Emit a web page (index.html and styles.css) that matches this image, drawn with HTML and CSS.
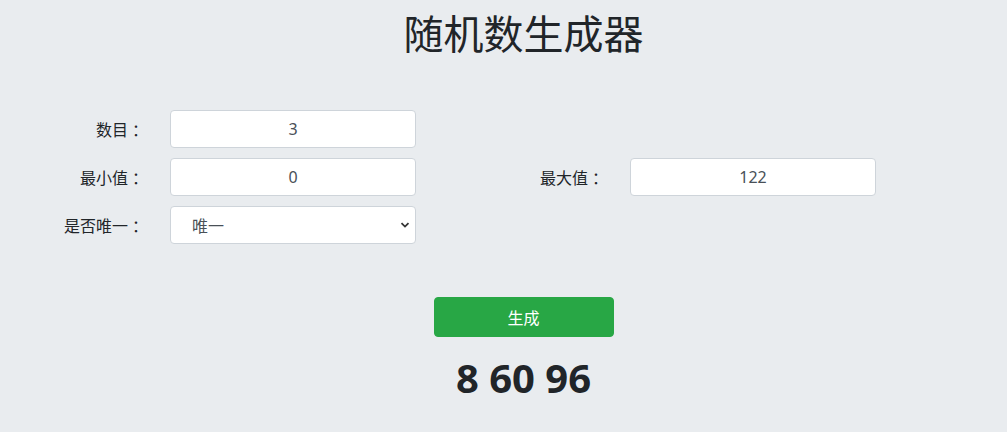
FILE: index.html
```html
<!DOCTYPE html>
<html lang="zh">
<head>
<meta charset="utf-8">
<title>随机数生成器</title>
<link rel="stylesheet" href="styles.css">
</head>
<body>
<div class="page">
  <h1 class="title">随机数生成器</h1>
  <div class="form">
    <label class="lbl">数目<span class="colon">：</span></label>
    <input class="ctl" type="text" value="3">
    <span></span><span></span>
    <label class="lbl">最小值<span class="colon">：</span></label>
    <input class="ctl" type="text" value="0">
    <label class="lbl">最大值<span class="colon">：</span></label>
    <input class="ctl" type="text" value="122">
    <label class="lbl">是否唯一<span class="colon">：</span></label>
    <div class="selwrap">
      <select class="ctl sel"><option>唯一</option><option>不唯一</option></select>
      <svg class="chev" width="10" height="8" viewBox="0 0 10 8"><path d="M1.5 2.2 L5 5.6 L8.5 2.2" fill="none" stroke="#333" stroke-width="1.8"/></svg>
    </div>
  </div>
  <div class="actions">
    <button class="btn">生成</button>
    <div class="result">8 60 96</div>
  </div>
</div>
</body>
</html>
```
FILE: styles.css
```css
html, body {
  margin: 0;
  padding: 0;
  background: #e9ecef;
  color: #212529;
  font-family: "Noto Sans", "Noto Sans CJK SC", sans-serif;
}
.page {
  padding-left: 40px;
}
.title {
  margin: 0;
  padding-top: 8px;
  text-align: center;
  font-size: 40px;
  font-weight: 400;
  line-height: 1.2;
  font-family: "Noto Sans CJK SC", sans-serif;
}
.form {
  margin-top: 54px;
  display: grid;
  grid-template-columns: 106px 246px 166px 246px;
  column-gap: 24px;
  row-gap: 10px;
  align-items: center;
}
.lbl {
  text-align: right;
  margin-right: -2px;
  font-size: 16px;
  font-family: "Noto Sans CJK SC", sans-serif;
  color: #212529;
}
.colon {
  padding-left: 4px;
  font-family: "Noto Sans CJK JP", sans-serif;
}
.ctl {
  box-sizing: border-box;
  width: 246px;
  height: 38px;
  border: 1px solid #ced4da;
  border-radius: 4px;
  background: #fff;
  text-align: center;
  font-size: 16px;
  color: #495057;
  font-family: "Noto Sans", "Noto Sans CJK SC", sans-serif;
  padding: 0 12px;
  margin: 0;
}
.selwrap {
  position: relative;
  width: 246px;
  height: 38px;
}
.sel {
  appearance: none;
  -webkit-appearance: none;
  text-align: left;
  padding-left: 21px;
  font-family: "Noto Sans CJK SC", sans-serif;
}
.chev {
  position: absolute;
  right: 6px;
  top: 15px;
  pointer-events: none;
}
.actions {
  display: flex;
  flex-direction: column;
  align-items: center;
  margin-top: 53px;
}
.btn {
  width: 180px;
  height: 40px;
  background: #28a745;
  border: 1px solid #28a745;
  border-radius: 4px;
  color: #fff;
  font-size: 16px;
  font-family: "Noto Sans CJK SC", sans-serif;
}
.result {
  margin-top: 17px;
  font-size: 40px;
  font-weight: 700;
  line-height: 1.2;
  font-family: "Noto Sans", sans-serif;
}
```
